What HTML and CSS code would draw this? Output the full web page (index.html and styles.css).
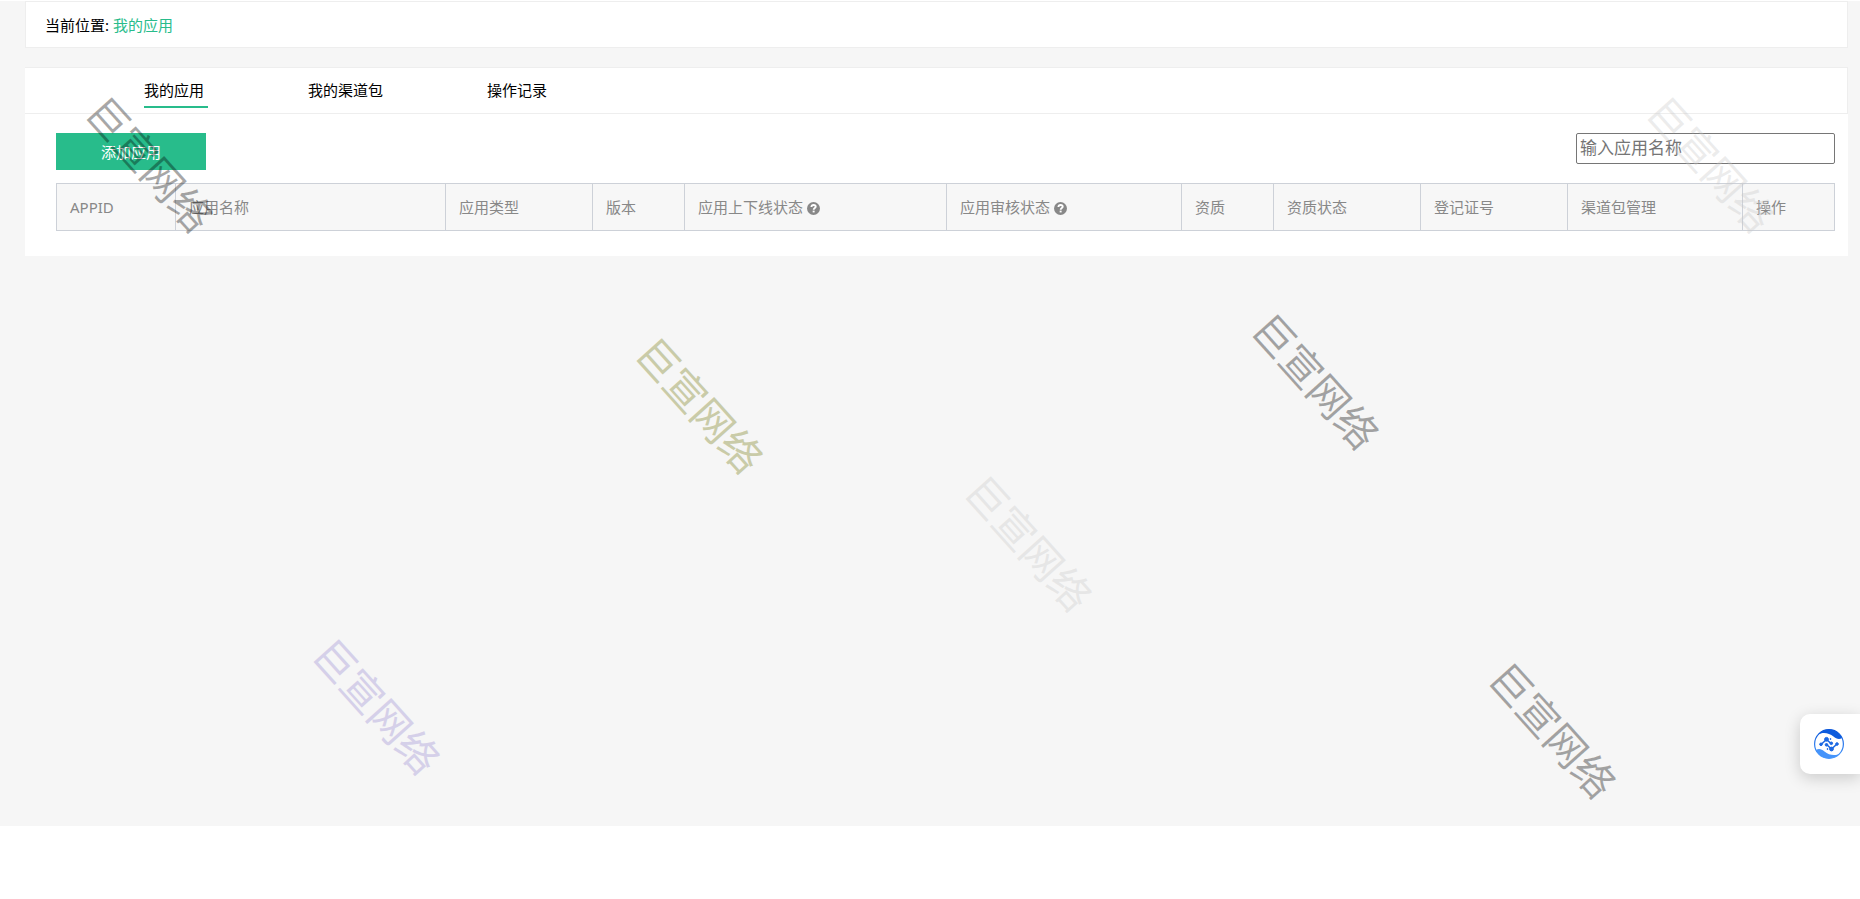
FILE: index.html
```html
<!DOCTYPE html>
<html lang="zh-CN">
<head>
<meta charset="utf-8">
<title>我的应用</title>
<link rel="stylesheet" href="styles.css">
</head>
<body>
<main class="page">
  <nav class="breadcrumb">当前位置: <a href="#">我的应用</a></nav>
  <section class="panel">
    <nav class="tabs">
      <a class="tab tab-active" href="#">我的应用</a>
      <a class="tab" href="#">我的渠道包</a>
      <a class="tab" href="#">操作记录</a>
    </nav>
    <div class="content">
      <div class="toolbar">
        <button class="add" type="button">添加应用</button>
        <input class="search" type="text" placeholder="输入应用名称" aria-label="输入应用名称">
      </div>
      <table class="apps">
        <colgroup>
          <col class="c-id"><col class="c-name"><col class="c-mid"><col class="c-small"><col class="c-online"><col class="c-audit"><col class="c-small"><col class="c-mid"><col class="c-mid"><col class="c-channel"><col class="c-small">
        </colgroup>
        <thead>
          <tr>
            <th>APPID</th>
            <th>应用名称</th>
            <th>应用类型</th>
            <th>版本</th>
            <th>应用上下线状态 <svg class="help" viewBox="0 0 14 14"><circle cx="7" cy="7" r="7" fill="#888"/><path d="M4.700 5.400C4.800 4 5.800 3.200 7.100 3.200c1.400 0 2.300.8 2.300 1.900C9.400 6.600 7.200 6.600 7.200 8.400" fill="none" stroke="#fff" stroke-width="2"/><path d="M6.100 9.300h2.100v1.900H6.100z" fill="#fff"/></svg></th>
            <th>应用审核状态 <svg class="help" viewBox="0 0 14 14"><circle cx="7" cy="7" r="7" fill="#888"/><path d="M4.700 5.400C4.800 4 5.800 3.200 7.100 3.200c1.400 0 2.300.8 2.300 1.900C9.400 6.600 7.200 6.600 7.200 8.400" fill="none" stroke="#fff" stroke-width="2"/><path d="M6.100 9.300h2.100v1.900H6.100z" fill="#fff"/></svg></th>
            <th>资质</th>
            <th>资质状态</th>
            <th>登记证号</th>
            <th>渠道包管理</th>
            <th>操作</th>
          </tr>
        </thead>
      </table>
    </div>
  </section>
</main>

<div class="marks" aria-hidden="true">
  <span class="mark dark m1">巨宣网络</span>
  <span class="mark light m2">巨宣网络</span>
  <span class="mark olive m3">巨宣网络</span>
  <span class="mark dark m4">巨宣网络</span>
  <span class="mark light m5">巨宣网络</span>
  <span class="mark violet m6">巨宣网络</span>
  <span class="mark dark m7">巨宣网络</span>
</div>

<button class="float" type="button" aria-label="助手">
  <svg viewBox="0 0 30 30" width="30" height="30">
    <defs><linearGradient id="g" x1="0" y1="0" x2="0" y2="1"><stop offset="0" stop-color="#0a55d8"/><stop offset="1" stop-color="#4a9bff"/></linearGradient></defs>
    <circle cx="15" cy="15" r="14.400" fill="none" stroke="url(#g)" stroke-width="1.200"/>
    <path d="M4 5.500C10-1.500 23-1.500 28 9c-3 1.800-6 .6-8.500-1.500C15 3.800 9 2.600 4 5.500z" fill="#0d5bdd"/>
    <path d="M26 24.500C20 31.500 7 31.500 2 21c3-1.800 6-.6 8.500 1.500C15 26.200 21 27.400 26 24.500z" fill="#4594fa"/>
    <g fill="#1c68e3" stroke="#1c68e3">
      <path d="M7 15.500l5.500-5 4.500 4M12.500 15.500l5 4.500 5.500-5" fill="none" stroke-width="1.600"/>
      <circle cx="7" cy="15.300" r="1.300"/><circle cx="12.500" cy="10.300" r="1.900"/><circle cx="17.300" cy="14.300" r="1.300"/><circle cx="12.500" cy="15.800" r="1.300"/><circle cx="17.500" cy="20" r="1.900"/><circle cx="23" cy="15" r="1.300"/><circle cx="16.500" cy="10" r=".5"/><circle cx="13.500" cy="20" r=".5"/>
    </g>
  </svg>
</button>
</body>
</html>
```
FILE: styles.css
```css
* { box-sizing: border-box; }

body {
  margin: 0;
  padding-top: 1px;
  position: relative;
  background: #fff;
  color: #000;
  font: 15px/22px "Noto Sans", "Noto Sans CJK SC", sans-serif;
}

a { color: inherit; text-decoration: none; }

.page {
  min-height: 825px;
  padding: 0 12px 0 25px;
  background: #f6f6f6;
}

.breadcrumb {
  padding: 12px 19px 11px;
  border: 1px solid #eee;
  background: #fff;
  margin-bottom: 19px;
}
.breadcrumb a { color: #28bc8b; }

.panel { background: #fff; }

.tabs {
  display: flex;
  gap: 100px;
  padding: 10px 119px 5px;
  border: 1px solid #eee;
  border-left: 0;
}
.tab {
  padding: 1px 4px 5px 0;
  border-bottom: 2px solid transparent;
}
.tab-active { border-bottom-color: #28bc8b; }

.content { padding: 19px 13px 25px 31px; }

.toolbar {
  display: flex;
  justify-content: space-between;
  align-items: flex-start;
  margin-bottom: 13px;
}
.add {
  width: 150px;
  height: 37px;
  padding: 0;
  border: 0;
  background: #28bc8b;
  color: #fff;
  font: inherit;
}
.search {
  width: 259px;
  height: 31px;
  padding: 0 3px 3px;
  border: 1px solid #767676;
  border-radius: 2px;
  color: #333;
  font: inherit;
  font-size: 17px;
}
.search::placeholder { color: #757575; }

.apps {
  width: 100%;
  table-layout: fixed;
  border-collapse: collapse;
}
.apps th {
  padding: 12px 13px;
  border: 1px solid #cdd1d8;
  background: #f7f7f7;
  color: #888;
  font-weight: 400;
  text-align: left;
  white-space: nowrap;
}
.help { width: 13px; height: 13px; vertical-align: -2px; }
.c-id { width: 119px; }
.c-name { width: 270px; }
.c-mid { width: 147px; }
.c-small { width: 92px; }
.c-online { width: 262px; }
.c-audit { width: 235px; }
.c-channel { width: 175px; }

.marks {
  position: absolute;
  inset: 0;
  pointer-events: none;
}
.mark {
  position: absolute;
  transform: translate(-50%, -50%) rotate(48deg);
  font-size: 41px;
  line-height: 48px;
  white-space: nowrap;
}
.dark { color: rgba(0, 0, 0, 0.34); }
.light { color: rgba(200, 200, 200, 0.35); }
.olive { color: #c9cba8; }
.violet { color: #d5d0e9; }
.m1 { left: 150px; top: 164px; }
.m2 { left: 1711px; top: 164px; }
.m3 { left: 700px; top: 405px; }
.m4 { left: 1316px; top: 381px; }
.m5 { left: 1029px; top: 543px; }
.m6 { left: 377px; top: 706px; }
.m7 { left: 1553px; top: 730px; }

.float {
  position: fixed;
  right: 0;
  top: 714px;
  width: 60px;
  height: 60px;
  padding: 0 2px 0 0;
  border: 0;
  border-radius: 10px 0 0 10px;
  background: #fff;
  box-shadow: 0 4px 16px rgba(0, 0, 0, 0.18);
  display: flex;
  align-items: center;
  justify-content: center;
}
```
